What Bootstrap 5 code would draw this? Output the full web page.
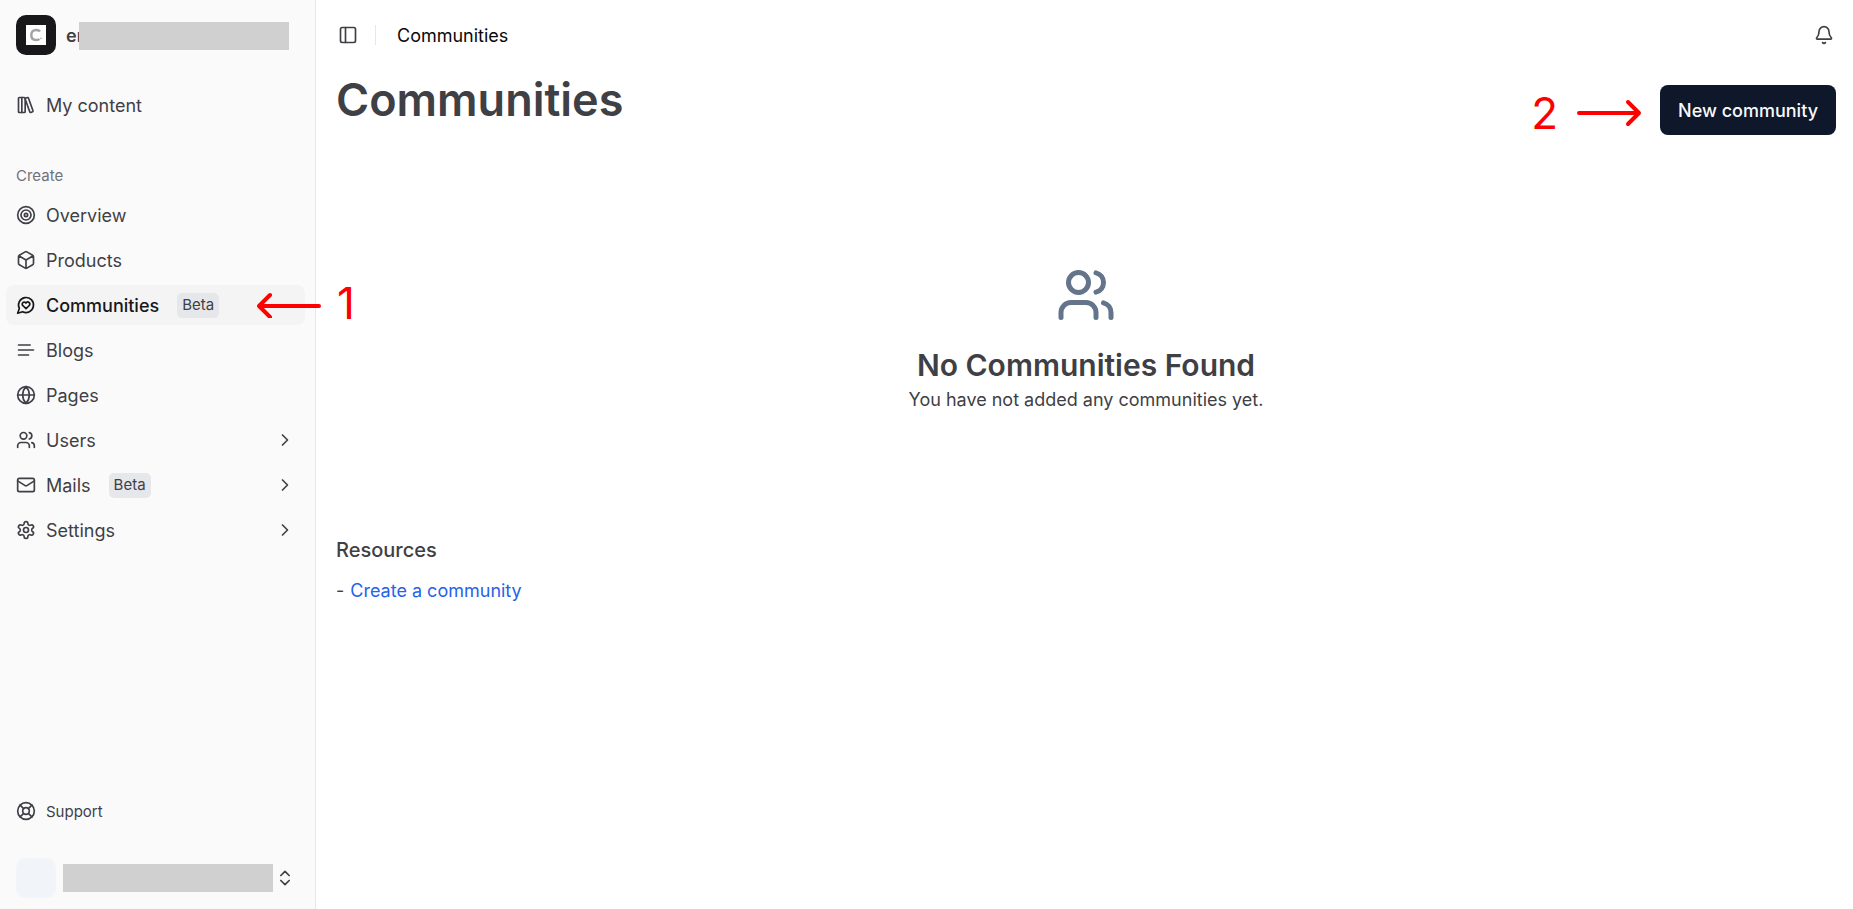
<!DOCTYPE html>
<html lang="en">
<head>
<meta charset="utf-8">
<meta name="viewport" content="width=device-width, initial-scale=1">
<title>Communities</title>
<link href="https://cdn.jsdelivr.net/npm/bootstrap@5.3.0/dist/css/bootstrap.min.css" rel="stylesheet">
<style>
  body { font-family: Inter, sans-serif; font-size: 18px; line-height: 25px; color: #3f3f46; background: #fff; }
  .ico { width: 20px; height: 20px; flex: none; fill: none; stroke: currentColor; stroke-width: 2; stroke-linecap: round; stroke-linejoin: round; }
  .side { width: 316px; background: #fafafa; border-right: 1px solid #e2e8f0; padding: 0 10px 11px 6px; }
  .brand { height: 70px; padding: 0 10px; gap: 10px; }
  .tile { width: 40px; height: 40px; border-radius: 10px; flex: none; }
  .tile-dark { background: #18181b; }
  .tile-pale { background: #f1f5f9; }
  .redact { background: #d0d0d0; height: 28px; width: 210px; }
  .brand .redact { left: 73px; top: 22px; }
  .menu { gap: 5px; }
  .menu-first { margin-top: 15px; }
  .item { height: 40px; padding: 0 10px; gap: 10px; border-radius: 8px; color: #3f3f46; text-decoration: none; display: flex; align-items: center; width: 100%; border: 0; background: none; text-align: left; }
  .item.on { background: #f4f4f5; color: #18181b; font-weight: 500; }
  .tag { background: #e5e7eb; color: #3f3f46; font-size: 15px; font-weight: 400; height: 25px; line-height: 24px; padding: 0 5px; border-radius: 5px; margin-left: 8px; }
  .small-text { font-size: 15px; }
  .group-label { font-size: 15px; color: #71717a; height: 40px; padding: 0 10px; margin-top: 30px; }
  .account { padding: 0 10px; margin-top: 27px; }
  .account .redact { margin: 0 2px 0 7px; }
  .note { color: #f00; font-size: 44px; line-height: 50px; font-weight: 400; }
  .arrow { width: 64px; height: 26px; flex: none; fill: none; stroke: #f00; stroke-width: 4; stroke-linecap: round; stroke-linejoin: round; }
  .note-one { left: 251px; top: 0; height: 40px; gap: 16px; z-index: 2; pointer-events: none; }
  .note-one .note { padding-bottom: 4px; }
  .page { padding: 0 17px 0 20px; }
  .topbar { height: 70px; padding: 0 2px; }
  .plain { border: 0; background: none; color: #3f3f46; }
  .toggle, .bell { padding: 0; }
  .rule { width: 1px; height: 20px; background: #e2e8f0; margin: 0 21px 0 17px; }
  .crumb { color: #09090b; }
  .headline { padding-top: 5px; }
  h1 { font-size: 45px; line-height: 50px; font-weight: 600; }
  .calls { margin-top: 7px; gap: 19px; }
  .calls .note { padding-top: 6px; }
  .cta { background: #0f172a; color: #f8fafc; font-size: 18px; line-height: 25px; font-weight: 500; height: 50px; padding: 0 18px; border-radius: 8px; border: 0; }
  .cta:hover { background: #1e293b; color: #f8fafc; }
  .empty { padding: 127px 0 120px; }
  .empty .ico { width: 60px; height: 60px; color: #64748b; }
  .empty p { line-height: 30px; }
  h2 { font-size: 30px; line-height: 40px; font-weight: 600; margin: 20px 0 0; }
  h3 { font-size: 20px; line-height: 30px; font-weight: 500; margin-bottom: 13px; }
  .docs { gap: 6px; }
  .doc { color: #2563eb; text-decoration: none; }
</style>
</head>
<body>
<svg class="d-none" aria-hidden="true">
  <symbol id="users" viewBox="0 0 24 24"><path d="M16 21v-2a4 4 0 0 0-4-4H6a4 4 0 0 0-4 4v2"/><circle cx="9" cy="7" r="4"/><path d="M22 21v-2a4 4 0 0 0-3-3.870M16 3.130a4 4 0 0 1 0 7.750"/></symbol>
  <symbol id="right" viewBox="0 0 24 24"><path d="m9 18 6-6-6-6"/></symbol>
</svg>
<div class="d-flex min-vh-100">
  <aside class="side d-flex flex-column flex-shrink-0">
    <div class="brand d-flex align-items-center position-relative fw-semibold">
      <span class="tile tile-dark d-flex align-items-center justify-content-center">
        <svg width="20" height="20" viewBox="0 0 20 20" aria-hidden="true"><path fill="#fff" d="M0 0h20v20H0z"/><path d="M14 6.500C13 5 11.800 5 10 5C7 5 5.300 7 5.300 10S7 15 10 15C11.500 15 12.800 14.800 13.500 14" fill="none" stroke="#a3a3a3" stroke-width="2.500"/><circle cx="15" cy="13.300" r=".8" fill="#a3a3a3"/></svg>
      </span>
      <span>en</span>
      <span class="redact position-absolute"></span>
    </div>
    <nav aria-label="Main">
      <div class="menu menu-first d-flex flex-column">
        <a class="item" href="#"><svg class="ico" viewBox="0 0 24 24"><rect width="8" height="18" x="3" y="3" rx="1"/><path d="M7 3v18M20.400 18.900c.2.5-.1 1.100-.6 1.300l-1.900.7c-.5.2-1.100-.1-1.300-.6L11.100 5.100c-.2-.5.1-1.100.6-1.300l1.900-.7c.5-.2 1.100.1 1.300.6Z"/></svg>My content</a>
      </div>
      <div class="group-label d-flex align-items-center">Create</div>
      <div class="menu d-flex flex-column">
        <a class="item" href="#"><svg class="ico" viewBox="0 0 24 24"><circle cx="12" cy="12" r="10"/><circle cx="12" cy="12" r="6"/><circle cx="12" cy="12" r="2"/></svg>Overview</a>
        <a class="item" href="#"><svg class="ico" viewBox="0 0 24 24"><path d="M21 8a2 2 0 0 0-1-1.730l-7-4a2 2 0 0 0-2 0l-7 4A2 2 0 0 0 3 8v8a2 2 0 0 0 1 1.730l7 4a2 2 0 0 0 2 0l7-4A2 2 0 0 0 21 16ZM3.300 7l8.700 5 8.700-5M12 22V12"/></svg>Products</a>
        <div class="position-relative">
          <a class="item on" href="#" aria-current="page"><svg class="ico" viewBox="0 0 24 24"><path d="M7.900 20A9 9 0 1 0 4 16.100L2 22Z"/><path d="M15.800 9.200a2.500 2.500 0 0 0-3.500 0l-.3.4-.35-.3a2.420 2.420 0 1 0-3.200 3.600l3.600 3.500 3.600-3.500c1.200-1.200 1.100-2.700.2-3.700"/></svg>Communities<span class="tag">Beta</span></a>
          <div class="note-one position-absolute d-flex align-items-center">
            <svg class="arrow" viewBox="0 0 64 26" aria-hidden="true"><path d="M62 14H2M13 3 2 14l11 11"/></svg>
            <span class="note">1</span>
          </div>
        </div>
        <a class="item" href="#"><svg class="ico" viewBox="0 0 24 24"><path d="M17 6H3M21 12H3M15 18H3"/></svg>Blogs</a>
        <a class="item" href="#"><svg class="ico" viewBox="0 0 24 24"><circle cx="12" cy="12" r="10"/><path d="M12 2a14.500 14.500 0 0 0 0 20 14.500 14.500 0 0 0 0-20M2 12h20"/></svg>Pages</a>
        <button class="item" type="button"><svg class="ico"><use href="#users"/></svg>Users<svg class="ico ms-auto"><use href="#right"/></svg></button>
        <button class="item" type="button"><svg class="ico" viewBox="0 0 24 24"><rect width="20" height="16" x="2" y="4" rx="2"/><path d="m22 7-8.970 5.700a1.940 1.940 0 0 1-2.060 0L2 7"/></svg>Mails<span class="tag">Beta</span><svg class="ico ms-auto"><use href="#right"/></svg></button>
        <button class="item" type="button"><svg class="ico" viewBox="0 0 24 24"><path d="M12.220 2h-.44a2 2 0 0 0-2 2v.18a2 2 0 0 1-1 1.730l-.43.25a2 2 0 0 1-2 0l-.15-.08a2 2 0 0 0-2.730.73l-.22.38a2 2 0 0 0 .73 2.730l.15.1a2 2 0 0 1 1 1.720v.51a2 2 0 0 1-1 1.740l-.15.09a2 2 0 0 0-.73 2.730l.22.38a2 2 0 0 0 2.730.73l.15-.08a2 2 0 0 1 2 0l.43.25a2 2 0 0 1 1 1.730V20a2 2 0 0 0 2 2h.44a2 2 0 0 0 2-2v-.18a2 2 0 0 1 1-1.730l.43-.25a2 2 0 0 1 2 0l.15.08a2 2 0 0 0 2.730-.73l.22-.39a2 2 0 0 0-.73-2.730l-.15-.08a2 2 0 0 1-1-1.740v-.5a2 2 0 0 1 1-1.740l.15-.09a2 2 0 0 0 .73-2.730l-.22-.38a2 2 0 0 0-2.730-.73l-.15.08a2 2 0 0 1-2 0l-.43-.25a2 2 0 0 1-1-1.730V4a2 2 0 0 0-2-2z"/><circle cx="12" cy="12" r="3"/></svg>Settings<svg class="ico ms-auto"><use href="#right"/></svg></button>
      </div>
    </nav>
    <div class="mt-auto">
      <a class="item small-text" href="#"><svg class="ico" viewBox="0 0 24 24"><circle cx="12" cy="12" r="10"/><path d="m4.930 4.930 4.240 4.240M14.830 9.170l4.240-4.240M14.830 14.830l4.240 4.240M9.170 14.830l-4.240 4.240"/><circle cx="12" cy="12" r="4"/></svg>Support</a>
    </div>
    <button class="account plain d-flex align-items-center" type="button" aria-label="Account">
      <span class="tile tile-pale"></span>
      <span class="redact"></span>
      <svg class="ico" viewBox="0 0 24 24"><path d="m7 15 5 5 5-5M7 9l5-5 5 5"/></svg>
    </button>
  </aside>
  <main class="page flex-grow-1">
    <header class="topbar d-flex align-items-center">
      <button class="toggle plain d-flex" type="button" aria-label="Toggle sidebar"><svg class="ico" viewBox="0 0 24 24"><rect width="18" height="18" x="3" y="3" rx="2"/><path d="M9 3v18"/></svg></button>
      <span class="rule"></span>
      <span class="crumb">Communities</span>
      <button class="bell plain d-flex ms-auto" type="button" aria-label="Notifications"><svg class="ico" viewBox="0 0 24 24"><path d="M3.262 15.326A1 1 0 0 0 4 17h16a1 1 0 0 0 .74-1.673C19.410 13.956 18 12.499 18 8A6 6 0 0 0 6 8c0 4.499-1.411 5.956-2.738 7.326M10.268 21a2 2 0 0 0 3.464 0"/></svg></button>
    </header>
    <div class="headline d-flex align-items-start">
      <h1 class="mb-0 me-auto">Communities</h1>
      <div class="d-flex align-items-center calls">
        <span class="note">2</span>
        <svg class="arrow" viewBox="0 0 64 26" overflow="visible" aria-hidden="true"><path d="M2 16h60M51 5l11 11-11 11"/></svg>
        <button class="btn cta" type="button">New community</button>
      </div>
    </div>
    <section class="empty text-center">
      <svg class="ico d-block mx-auto" aria-hidden="true"><use href="#users"/></svg>
      <h2>No Communities Found</h2>
      <p class="mb-0">You have not added any communities yet.</p>
    </section>
    <section>
      <h3>Resources</h3>
      <p class="docs d-flex mb-0">- <a class="doc" href="#">Create a community</a></p>
    </section>
  </main>
</div>
<script src="https://cdn.jsdelivr.net/npm/bootstrap@5.3.0/dist/js/bootstrap.bundle.min.js"></script>
</body>
</html>
